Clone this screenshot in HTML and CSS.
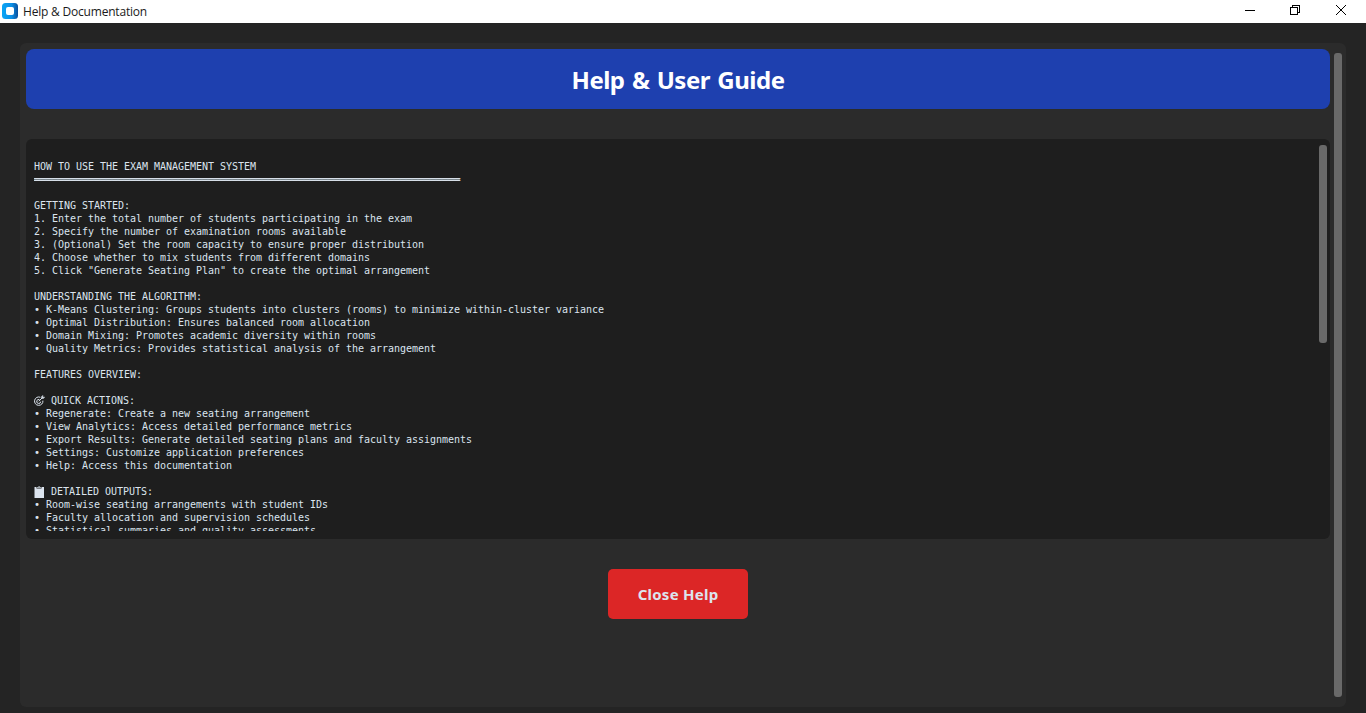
FILE: index.html
```html
<!DOCTYPE html>
<html lang="en">
<head>
<meta charset="utf-8">
<title>Help &amp; Documentation</title>
<link rel="stylesheet" href="styles.css">
</head>
<body>
<header class="titlebar">
  <svg class="app-icon" width="16" height="16" viewBox="0 0 16 16">
    <defs><linearGradient id="g" x1="0" y1="0" x2="1" y2="0"><stop offset="0" stop-color="#0aa5f5"/><stop offset=".6" stop-color="#0c8fe6"/><stop offset="1" stop-color="#0a4f9c"/></linearGradient></defs>
    <rect width="16" height="16" rx="3.5" fill="url(#g)"/>
    <rect x="4" y="4" width="8" height="8" rx="2" fill="#fff"/>
  </svg>
  <span class="window-title">Help &amp; Documentation</span>
  <svg class="window-controls" width="138" height="23" viewBox="0 0 138 23" fill="none" stroke="#000" stroke-width="1">
    <path d="M17 10.5h10" shape-rendering="crispEdges"/>
    <path d="M62.5 7.5h7v7h-7zM64.5 7.5v-2h7v7h-2" shape-rendering="crispEdges"/>
    <path d="M108 5l10 10M118 5l-10 10"/>
  </svg>
</header>
<main class="window">
  <div class="panel">
    <div class="content">
      <h1 class="banner"><span class="banner-text">Help &amp; User Guide</span></h1>
      <section class="textbox">
<pre class="guide">

HOW TO USE THE EXAM MANAGEMENT SYSTEM
<span class="rule">═══════════════════════════════════════════════════════════════════════</span>

GETTING STARTED:
1. Enter the total number of students participating in the exam
2. Specify the number of examination rooms available
3. (Optional) Set the room capacity to ensure proper distribution
4. Choose whether to mix students from different domains
5. Click "Generate Seating Plan" to create the optimal arrangement

UNDERSTANDING THE ALGORITHM:
• K-Means Clustering: Groups students into clusters (rooms) to minimize within-cluster variance
• Optimal Distribution: Ensures balanced room allocation
• Domain Mixing: Promotes academic diversity within rooms
• Quality Metrics: Provides statistical analysis of the arrangement

FEATURES OVERVIEW:

<svg class="glyph" width="11" height="12" viewBox="0 0 11 12" fill="none" stroke="#dce4ee" stroke-width="1"><path d="M6.4 2.3A4.2 4.2 0 1 0 8.9 5.6"/><path d="M5.4 4.6A2 2 0 1 0 6.7 6.6M4.8 6.3L8.2 2.8"/><path d="M7.6 3.4V1.6L8.8.4V2.2H10.7L9.4 3.4Z" fill="#dce4ee" stroke-width=".5"/></svg> QUICK ACTIONS:
• Regenerate: Create a new seating arrangement
• View Analytics: Access detailed performance metrics
• Export Results: Generate detailed seating plans and faculty assignments
• Settings: Customize application preferences
• Help: Access this documentation

<svg class="glyph" width="11" height="12" viewBox="0 0 11 12"><path d="M.5 1h2v1.5h5V1h2.5v11H.5z" fill="#dce4ee"/><path d="M3 2V.9h1.2L4.6 0h1l.4.9h1V2z" fill="#a4abb2"/></svg> DETAILED OUTPUTS:
• Room-wise seating arrangements with student IDs
• Faculty allocation and supervision schedules
• Statistical summaries and quality assessments
</pre>
        <div class="inner-track"><div class="inner-thumb"></div></div>
      </section>
      <button class="close">Close Help</button>
    </div>
    <div class="outer-thumb"></div>
  </div>
</main>
</body>
</html>
```
FILE: styles.css
```css
* { box-sizing: border-box; }
body {
  margin: 0;
  height: 713px;
  display: flex;
  flex-direction: column;
  overflow: hidden;
  background: #242424;
  font-family: "Noto Sans", "Open Sans", sans-serif;
}
.titlebar {
  height: 23px;
  flex: none;
  display: flex;
  align-items: center;
  padding-left: 2px;
  background: #fff;
}
.app-icon { margin-bottom: 1px; }
.window-title {
  margin-left: 5px;
  font-family: "Open Sans", sans-serif;
  font-size: 12px;
  letter-spacing: -0.2px;
  line-height: 22px;
  color: #1a1a1a;
}
.window-controls { margin-left: auto; }
.window { flex: 1; padding: 20px 20px 6px; }
.panel {
  height: 100%;
  display: flex;
  padding: 6px 4px 10px 6px;
  border-radius: 6px;
  background: #2b2b2b;
}
.content {
  flex: 1;
  display: flex;
  flex-direction: column;
  align-items: center;
}
.banner {
  width: 100%;
  height: 60px;
  margin: 0 0 30px;
  padding-top: 2px;
  display: flex;
  align-items: center;
  justify-content: center;
  border-radius: 8px;
  background: #1e40af;
  color: #fff;
  font-size: 24px;
  font-weight: 700;
  letter-spacing: -0.5px;
  word-spacing: 1.6px;
  line-height: 32px;
}
.textbox {
  width: 100%;
  height: 400px;
  display: flex;
  padding: 6px 3px 8px 8px;
  border-radius: 6px;
  background: #1e1e1e;
}
.guide {
  flex: 1;
  height: 386px;
  margin: 0;
  padding-top: 2px;
  overflow: hidden;
  color: #dce4ee;
  font-family: "DejaVu Sans Mono", monospace;
  font-size: 10px;
  letter-spacing: -0.02px;
  line-height: 13px;
}
.rule { text-shadow: 0 0 0 #dce4ee; }
.glyph { vertical-align: -1px; margin: -2px 0; }
.inner-thumb { width: 8px; height: 198px; border-radius: 3px; background: #696969; }
.close {
  width: 140px;
  height: 50px;
  margin-top: 30px;
  padding: 0;
  border: 0;
  border-radius: 5px;
  background: #dc2626;
  color: #dce4ee;
  font: 700 15px/20px "Noto Sans", sans-serif;
  letter-spacing: 0.25px;
}
.outer-thumb {
  width: 8px;
  height: 644px;
  margin: 4px 0 0 4px;
  border-radius: 3px;
  background: #696969;
}
```
